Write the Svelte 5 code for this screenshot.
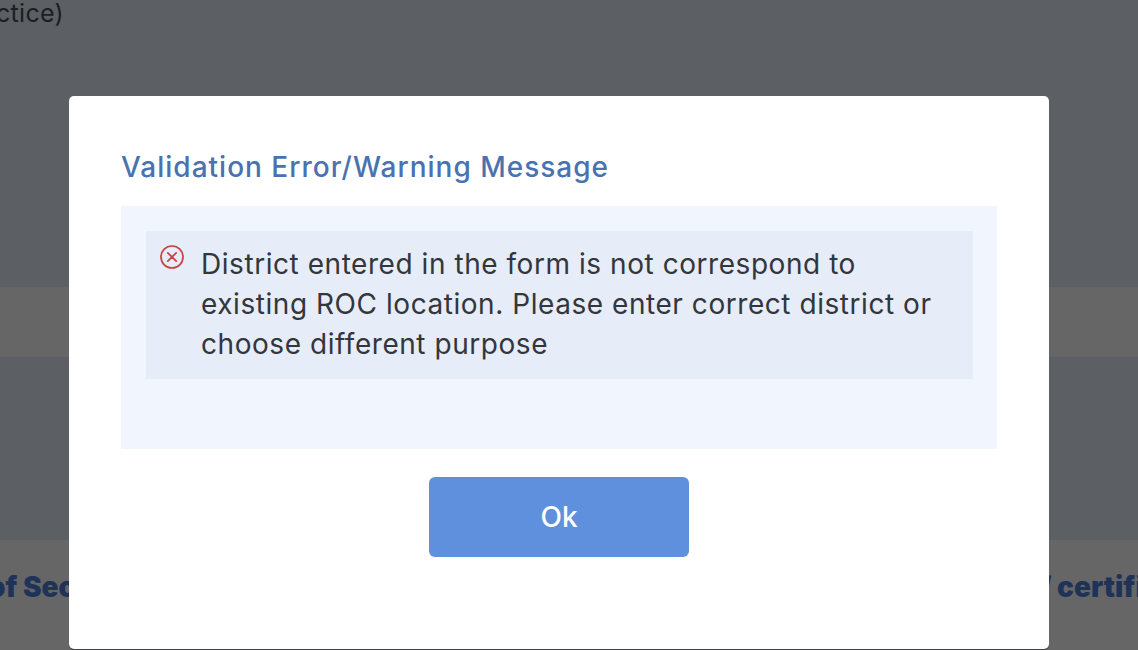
<script>
  const message = 'District entered in the form is not correspond to existing ROC location. Please enter correct district or choose different purpose';
</script>

<div class="page">
  <div class="backdrop">
    <div class="band top"><span class="practice">ctice)</span></div>
    <div class="band light"></div>
    <div class="band mid"></div>
    <div class="band light bottom">
      <span class="heading left">of Sec</span>
      <span class="heading right">/ certifi</span>
    </div>
  </div>

  <div class="modal" role="dialog">
    <h2>Validation Error/Warning Message</h2>
    <div class="panel">
      <div class="alert">
        <svg class="icon" viewBox="0 0 24 24" width="24" height="24" aria-hidden="true">
          <circle cx="12" cy="12" r="11" />
          <path d="M7.8 7.8 16.2 16.2M16.2 7.8 7.8 16.2" />
        </svg>
        <p>{message}</p>
      </div>
    </div>
    <div class="actions"><button type="button">Ok</button></div>
  </div>
</div>

<style>
  :global(body) {
    margin: 0;
    font-family: "Inter", "Liberation Sans", sans-serif;
  }
  .page {
    position: relative;
    width: 1138px;
    height: 650px;
    overflow: hidden;
  }
  .backdrop {
    display: flex;
    flex-direction: column;
    height: 650px;
  }
  .band { position: relative; }
  .top { height: 287px; background: #5c5f63; }
  .light { height: 70px; background: #666666; }
  .mid { height: 183px; background: #5c5f63; }
  .bottom { height: 110px; }
  .practice {
    position: absolute;
    left: -4px;
    top: -5px;
    font-size: 25px;
    line-height: 36px;
    color: #1c1e22;
    letter-spacing: 0.3px;
  }
  .heading {
    position: absolute;
    top: 29px;
    font-size: 28px;
    line-height: 36px;
    font-weight: 900;
    color: #1f3358;
    white-space: nowrap;
  }
  .left { left: -12px; }
  .right { left: 1040px; }
  .modal {
    position: absolute;
    left: 69px;
    top: 96px;
    width: 980px;
    height: 553px;
    box-sizing: border-box;
    padding: 52px 52px 0;
    background: #fff;
    border-radius: 5px;
    box-shadow: 0 1px 0 #3d3f42;
  }
  h2 {
    margin: 0 0 20px;
    font-size: 28px;
    line-height: 38px;
    font-weight: 500;
    letter-spacing: 1px;
    color: #4a72b0;
    white-space: nowrap;
  }
  .panel {
    height: 243px;
    box-sizing: border-box;
    padding: 25px 24px 25px 25px;
    background: #f1f5fd;
  }
  .alert {
    display: flex;
    align-items: flex-start;
    height: 148px;
    box-sizing: border-box;
    padding: 13px 14px 0;
    background: #e6ecf8;
  }
  .icon {
    flex: none;
    margin: 1px 17px 0 0;
    fill: none;
    stroke: #c9403f;
    stroke-width: 1.7;
  }
  .icon path { stroke-linecap: round; }
  p {
    margin: 0;
    width: 740px;
    font-size: 28px;
    line-height: 40px;
    letter-spacing: 0.55px;
    color: #33363b;
  }
  .actions {
    display: flex;
    justify-content: center;
    margin-top: 28px;
  }
  button {
    width: 260px;
    height: 80px;
    border: 0;
    border-radius: 6px;
    background: #5f90de;
    color: #fff;
    font: 500 28px "Inter", "Liberation Sans", sans-serif;
  }
</style>
